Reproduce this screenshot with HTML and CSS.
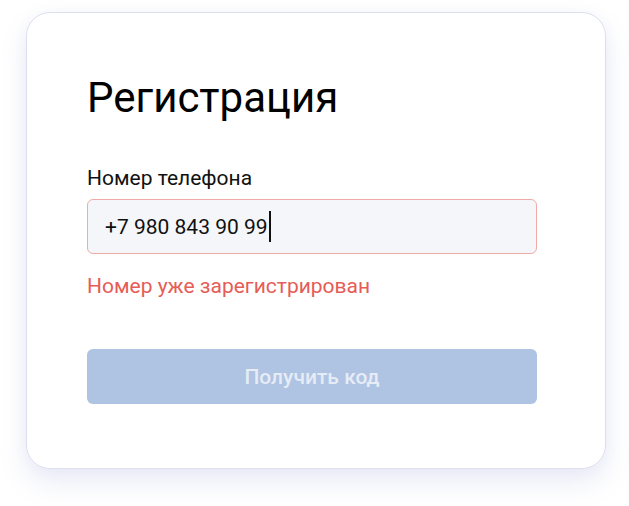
FILE: index.html
```html
<!DOCTYPE html>
<html lang="ru">
<head>
<meta charset="utf-8">
<link rel="stylesheet" href="styles.css">
</head>
<body>
<div class="card">
  <h1 class="title">Регистрация</h1>
  <label class="label">Номер телефона</label>
  <div class="input"><span class="value">+7 980 843 90 99</span><span class="caret"></span></div>
  <div class="error">Номер уже зарегистрирован</div>
  <button class="btn">Получить код</button>
</div>
</body>
</html>
```
FILE: styles.css
```css
html, body { margin: 0; padding: 0; background: #fff; }
body {
  font-family: Roboto, "Noto Sans", sans-serif;
  padding: 12px 0 40px 26px;
}
.card {
  box-sizing: border-box;
  width: 580px;
  height: 457px;
  border: 1px solid #dddeee;
  border-radius: 24px;
  padding: 60px 68px 0 60px;
  box-shadow: 0 14px 28px rgba(110, 125, 200, 0.14), 0 2px 14px rgba(110, 125, 200, 0.06);
  display: flex;
  flex-direction: column;
}
.title {
  margin: 0;
  font-size: 42px;
  font-weight: 400;
  line-height: 49px;
  color: #000;
}
.label {
  margin-top: 44px;
  font-size: 21px;
  line-height: 25px;
  color: #111;
}
.input {
  margin-top: 8px;
  box-sizing: border-box;
  height: 55px;
  border: 1px solid #f0aaa8;
  border-radius: 6px;
  background: #f5f6fa;
  display: flex;
  align-items: center;
  padding-left: 17px;
  font-size: 21px;
  color: #111;
}
.caret {
  width: 2px;
  height: 31px;
  background: #111;
  margin-left: 1px;
}
.error {
  margin-top: 20px;
  font-size: 21px;
  line-height: 25px;
  color: #e65c57;
}
.btn {
  margin-top: 50px;
  height: 55px;
  border: 0;
  border-radius: 6px;
  background: #afc3e2;
  color: #e6ecf6;
  font-family: Roboto, "Noto Sans", sans-serif;
  font-size: 21px;
  font-weight: 500;
}
```
